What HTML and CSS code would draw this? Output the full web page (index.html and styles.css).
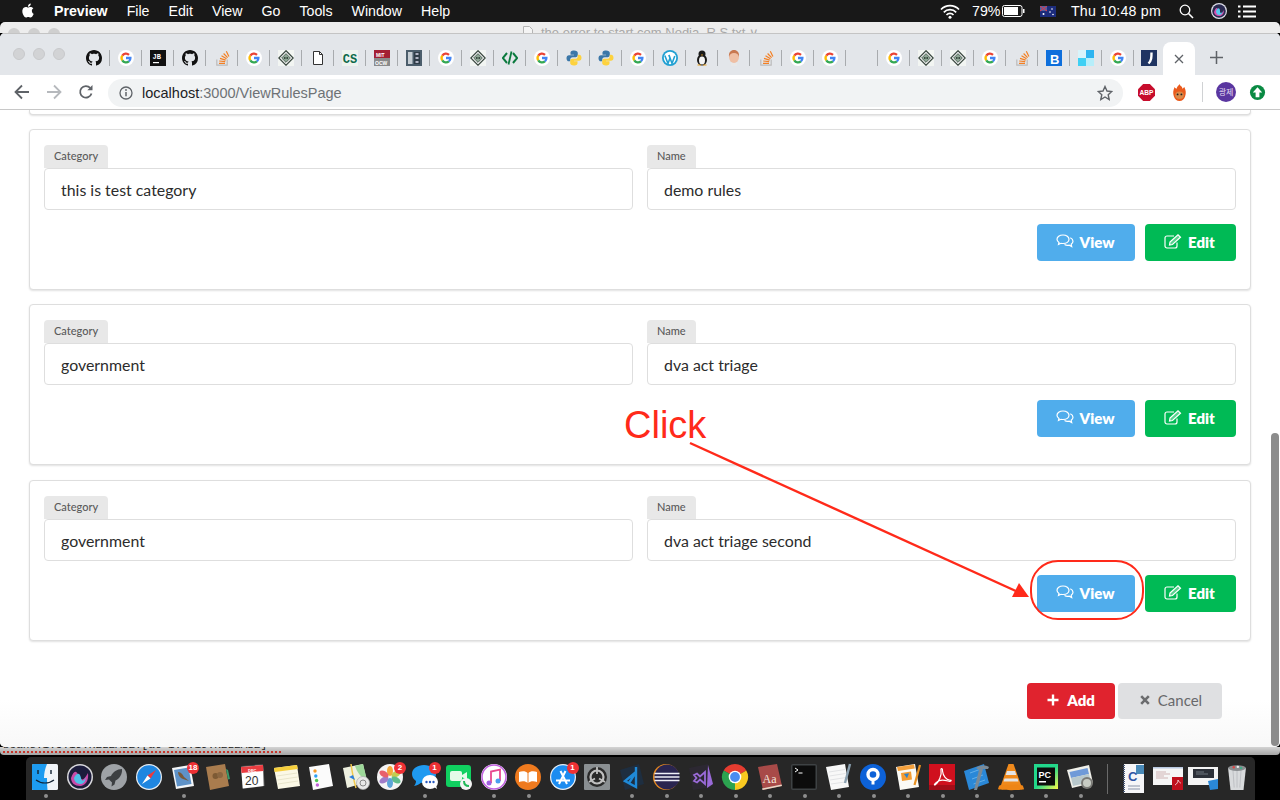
FILE: index.html
```html
<!DOCTYPE html>
<html lang="en">
<head>
    <meta charset="UTF-8">
    <title>View Rules Page</title>
    <link rel="stylesheet" href="styles.css">
</head>
<body>

<svg class="defs" width="0" height="0">
    <symbol id="fav-g" viewBox="0 0 16 16">
        <circle cx="8" cy="8" r="8" fill="#fff"/>
        <path d="M4.3 5.6A4.4 4.4 0 0 1 11 4.8" fill="none" stroke="#ea4335" stroke-width="2.3"/>
        <path d="M4.3 5.6a4.4 4.4 0 0 0 0 4.8" fill="none" stroke="#fbbc05" stroke-width="2.3"/>
        <path d="M4.3 10.4a4.4 4.4 0 0 0 6.6 1" fill="none" stroke="#34a853" stroke-width="2.3"/>
        <path d="M8 8h4.4a4.4 4.4 0 0 1-1.5 3.4" fill="none" stroke="#4285f4" stroke-width="2.3"/>
    </symbol>
    <symbol id="fav-gh" viewBox="0 0 16 16">
        <path fill="#111" d="M8 0C3.58 0 0 3.58 0 8c0 3.54 2.29 6.53 5.47 7.59.4.07.55-.17.55-.38 0-.19-.01-.82-.01-1.49-2.01.37-2.53-.49-2.69-.94-.09-.23-.48-.94-.82-1.13-.28-.15-.68-.52-.01-.53.63-.01 1.08.58 1.23.82.72 1.21 1.87.87 2.33.66.07-.52.28-.87.51-1.07-1.78-.2-3.64-.89-3.64-3.95 0-.87.31-1.59.82-2.15-.08-.2-.36-1.02.08-2.12 0 0 .67-.21 2.2.82.64-.18 1.32-.27 2-.27.68 0 1.36.09 2 .27 1.53-1.04 2.2-.82 2.2-.82.44 1.1.16 1.92.08 2.12.51.56.82 1.27.82 2.15 0 3.07-1.87 3.75-3.65 3.95.29.25.54.73.54 1.48 0 1.07-.01 1.93-.01 2.2 0 .21.15.46.55.38A8.013 8.013 0 0 0 16 8c0-4.42-3.58-8-8-8z"/>
    </symbol>
    <symbol id="fav-so" viewBox="0 0 16 16">
        <path d="M2.800 9.500V15.200h10.400V9.500" fill="none" stroke="#bcbbbb" stroke-width="1.200"/>
        <path d="M5 13.400h6M5.200 11l6 .6M6 8.400l5.700 1.700M7.500 5.800l5 3M9.600 3.500l4 4.100M12.300 1.200l2.600 5.200" fill="none" stroke="#f48024" stroke-width="1.200"/>
    </symbol>
    <symbol id="fav-d" viewBox="0 0 16 16">
        <rect width="16" height="16" fill="#f2f5f2"/>
        <path d="M8 .8 15.200 8 8 15.200.8 8z" fill="#fff" stroke="#3e4c44" stroke-width="1.300"/>
        <path d="M8 3.600 12.400 8 8 12.400 3.600 8z" fill="#8fa896" stroke="#3f4f45" stroke-width=".8"/>
        <circle cx="6.800" cy="8" r=".9" fill="#2f3f35"/>
        <circle cx="9.200" cy="8" r=".9" fill="#2f3f35"/>
    </symbol>
    <symbol id="fav-py" viewBox="0 0 16 16">
        <path d="M8 .5C5 .5 4.5 1.700 4.500 3v1.700H8v.6H3C1.500 5.300.5 6.400.5 8.200c0 2 1 3.100 2.400 3.100h1.400V9.500c0-1.400 1.100-2.300 2.400-2.300h3c1.200 0 2.100-.9 2.100-2.100V3c0-1.400-1.300-2.500-3.800-2.500z" fill="#3b77a8"/>
        <path d="M8 15.500c3 0 3.500-1.200 3.500-2.500v-1.700H8v-.6h5c1.500 0 2.500-1.100 2.500-2.900 0-2-1-3.100-2.400-3.100h-1.400v1.800c0 1.400-1.100 2.300-2.400 2.300h-3c-1.200 0-2.100.9-2.100 2.100V13c0 1.400 1.300 2.500 3.800 2.500z" fill="#fdd23e"/>
    </symbol>
    <symbol id="btn-view" viewBox="0 0 18 15">
        <path d="M7 1C3.500 1 1 3 1 5.300c0 1.300.8 2.400 2 3.200L2.500 10.500 5 9.300c.6.200 1.300.2 2 .2 3.500 0 6-1.900 6-4.200S10.500 1 7 1z" fill="none" stroke="#fff" stroke-width="1.200"/>
        <path d="M14.300 3.800C16 4.600 17 5.800 17 7.300c0 1.200-.7 2.200-1.800 3l.5 2.200-2.500-1.300c-1.500.4-3.300.2-4.700-.6" fill="none" stroke="#fff" stroke-width="1.200"/>
    </symbol>
    <symbol id="btn-edit" viewBox="0 0 18 15">
        <path d="M13 8.500V12a2 2 0 0 1-2 2H3a2 2 0 0 1-2-2V4a2 2 0 0 1 2-2h7" fill="none" stroke="#fff" stroke-width="1.200"/>
        <path d="M6 8 14 .8l2.500 2.500-8 7.200-3 .5z" fill="#fff" fill-opacity=".35" stroke="#fff" stroke-width="1.200"/>
    </symbol>
</svg>

<div class="screen">

    <header class="menubar">
        <svg class="apple" viewBox="0 0 24 24"><path fill="#fff" d="M12.152 6.896c-.948 0-2.415-1.078-3.96-1.04-2.04.027-3.91 1.183-4.961 3.014-2.117 3.675-.546 9.103 1.519 12.09 1.013 1.454 2.208 3.09 3.792 3.039 1.52-.065 2.09-.987 3.935-.987 1.831 0 2.35.987 3.96.948 1.637-.026 2.676-1.48 3.676-2.948 1.156-1.688 1.636-3.325 1.662-3.415-.039-.013-3.182-1.221-3.22-4.857-.026-3.04 2.48-4.494 2.597-4.559-1.429-2.09-3.623-2.324-4.39-2.376-2-.156-3.675 1.09-4.61 1.09zM15.53 3.83c.843-1.012 1.4-2.427 1.245-3.83-1.207.052-2.662.805-3.532 1.818-.78.896-1.454 2.338-1.273 3.714 1.338.104 2.715-.688 3.559-1.701"/></svg>
        <nav class="menu-items">
            <span class="menu-app">Preview</span>
            <span>File</span>
            <span>Edit</span>
            <span>View</span>
            <span>Go</span>
            <span>Tools</span>
            <span>Window</span>
            <span>Help</span>
        </nav>
        <div class="menu-status">
            <svg class="st-wifi" viewBox="0 0 20 15"><path d="M1 5.500a12.500 12.500 0 0 1 18 0M3.800 8.300a8.500 8.500 0 0 1 12.400 0M6.500 11a4.700 4.700 0 0 1 7 0" fill="none" stroke="#fff" stroke-width="1.700"/><circle cx="10" cy="13.300" r="1.500" fill="#fff"/></svg>
            <span class="st-batt-text">79%</span>
            <svg class="st-batt" viewBox="0 0 23 12"><rect x=".5" y=".5" width="19.500" height="11" rx="2" fill="none" stroke="#fff"/><rect x="2" y="2" width="14" height="8" fill="#fff"/><rect x="21" y="4" width="1.500" height="4" fill="#fff"/></svg>
            <svg class="st-flag" viewBox="0 0 16 11"><rect width="16" height="11" fill="#1c2c7c"/><rect width="7" height="5" fill="#5560a0"/><path d="M0 0l7 5M7 0 0 5" stroke="#e0384a" stroke-width="1"/><circle cx="3.500" cy="8" r="1" fill="#fff"/><circle cx="12" cy="3" r=".8" fill="#fff"/><circle cx="10" cy="6" r=".8" fill="#fff"/><circle cx="13" cy="8.500" r=".8" fill="#fff"/></svg>
            <span class="st-clock">Thu 10:48 pm</span>
            <svg class="st-search" viewBox="0 0 15 15"><circle cx="6" cy="6" r="4.800" fill="none" stroke="#fff" stroke-width="1.300"/><path d="M9.500 9.500 14 14" stroke="#fff" stroke-width="1.600"/></svg>
            <svg class="st-siri" viewBox="0 0 16 16"><circle cx="8" cy="8" r="8" fill="#dfe0ea"/><circle cx="8" cy="8" r="6.800" fill="#2a2a50"/><path d="M3 9c2-5 3-5 5-1s3 3 5-1c0 4-2 6-5 6s-5-2-5-4z" fill="#d84fae"/><path d="M5 8c2-4 4-3 4 0s2 2 3 0c-1 3-2 4-4 4s-3-2-3-4z" fill="#55c8ee"/></svg>
            <svg class="st-list" viewBox="0 0 18 13"><path d="M5 1.500h13M5 6.500h13M5 11.500h13" stroke="#fff" stroke-width="2"/><path d="M0 1.500h2.500M0 6.500h2.500M0 11.500h2.500" stroke="#fff" stroke-width="2"/></svg>
        </div>
    </header>

    <div class="back-window">
        <div class="back-lights"><i></i><i></i><i></i></div>
        <svg class="back-doc" viewBox="0 0 10 12"><path d="M.5.5h6l3 3v8h-9z" fill="#f4f4f4" stroke="#b4b4b4"/></svg>
        <div class="back-title">the error to start.com Nodia_R.S.txt ∨</div>
    </div>

    <main class="browser">
        <div class="tabstrip">
            <div class="lights"><i></i><i></i><i></i></div>
            <div class="tabs">
                <span class="tab"><svg><use href="#fav-gh"/></svg></span>
                <span class="tab"><svg><use href="#fav-g"/></svg></span>
                <span class="tab"><svg viewBox="0 0 16 16"><rect width="16" height="16" fill="#111"/><text x="2.500" y="8.500" class="fav-jb">JB</text><rect x="3" y="12" width="6" height="1.200" fill="#fff"/></svg></span>
                <span class="tab"><svg><use href="#fav-gh"/></svg></span>
                <span class="tab"><svg><use href="#fav-so"/></svg></span>
                <span class="tab"><svg><use href="#fav-g"/></svg></span>
                <span class="tab"><svg><use href="#fav-d"/></svg></span>
                <span class="tab"><svg viewBox="0 0 16 16"><path d="M3.500 1.500h6l3 3v10h-9z" fill="#fff" stroke="#333"/><path d="M9.500 1.500v3h3" fill="none" stroke="#333"/></svg></span>
                <span class="tab"><svg viewBox="0 0 16 16"><rect width="16" height="16" fill="#eef3ee"/><text x=".8" y="13" class="fav-cs">CS</text></svg></span>
                <span class="tab"><svg viewBox="0 0 16 16"><rect width="16" height="8" fill="#a31f34"/><rect y="8" width="16" height="8" fill="#8a8b8c"/><text x="2" y="7" class="fav-mit">MIT</text><text x="1" y="14.500" class="fav-mit">OCW</text></svg></span>
                <span class="tab"><svg viewBox="0 0 16 16"><rect width="16" height="16" fill="#4b5d6b"/><rect x="2" y="2" width="4.500" height="12" fill="#c6ced4"/><rect x="8" y="2" width="6" height="12" fill="#2f3d48"/><path d="M9.500 4h3M9.500 8h3M9.500 12h3" stroke="#dde" stroke-width="1.500"/></svg></span>
                <span class="tab"><svg><use href="#fav-g"/></svg></span>
                <span class="tab"><svg><use href="#fav-d"/></svg></span>
                <span class="tab"><svg viewBox="0 0 16 16"><path d="M5 3 .8 8 5 13M11 3l4.200 5L11 13" fill="none" stroke="#0b7a3e" stroke-width="2"/><path d="M9.500 1.500 6.500 14.500" stroke="#0b7a3e" stroke-width="1.800"/></svg></span>
                <span class="tab"><svg><use href="#fav-g"/></svg></span>
                <span class="tab"><svg><use href="#fav-py"/></svg></span>
                <span class="tab"><svg><use href="#fav-py"/></svg></span>
                <span class="tab"><svg><use href="#fav-g"/></svg></span>
                <span class="tab"><svg viewBox="0 0 16 16"><circle cx="8" cy="8" r="8" fill="#21a0d2"/><circle cx="8" cy="8" r="6.200" fill="#fff"/><path d="M2.800 5.500 6 13.500l2-5.500-1.200-3M7 5l3 8.500 2.800-7.500" fill="none" stroke="#21a0d2" stroke-width="1.600"/></svg></span>
                <span class="tab"><svg viewBox="0 0 16 16"><ellipse cx="8" cy="10" rx="5" ry="5.500" fill="#1a1a1a"/><circle cx="8" cy="4" r="3.500" fill="#1a1a1a"/><ellipse cx="8" cy="10.500" rx="3" ry="4" fill="#f4f4f4"/><path d="M7 4.500h2L8 6z" fill="#e8a020"/><path d="M3.500 15h3.500M9 15h3.500" stroke="#e8a020" stroke-width="1.200"/></svg></span>
                <span class="tab"><svg viewBox="0 0 16 16"><ellipse cx="8" cy="7" rx="5" ry="6" fill="#efbfa4"/><path d="M3 7c-.5-5 2-7 5-7s5.500 2 5 7c-1-3-2-4-5-4S4 4 3 7z" fill="#c87850"/><path d="M5 13h6v3H5z" fill="#e8e8e8"/></svg></span>
                <span class="tab"><svg><use href="#fav-so"/></svg></span>
                <span class="tab"><svg><use href="#fav-g"/></svg></span>
                <span class="tab"><svg><use href="#fav-g"/></svg></span>
                <span class="tab"></span>
                <span class="tab"><svg><use href="#fav-g"/></svg></span>
                <span class="tab"><svg><use href="#fav-d"/></svg></span>
                <span class="tab"><svg><use href="#fav-d"/></svg></span>
                <span class="tab"><svg><use href="#fav-g"/></svg></span>
                <span class="tab"><svg><use href="#fav-so"/></svg></span>
                <span class="tab"><svg viewBox="0 0 16 16"><rect width="16" height="16" fill="#0e6fdc"/><text x="4" y="14" class="fav-b">B</text></svg></span>
                <span class="tab"><svg viewBox="0 0 16 16"><rect x="8" width="8" height="8" fill="#2db4f0"/><rect y="8" width="8" height="8" fill="#3fd0f4"/><rect x="8" y="8" width="8" height="8" fill="#b6eefa"/><rect width="8" height="8" fill="#d8f4fb"/></svg></span>
                <span class="tab"><svg><use href="#fav-g"/></svg></span>
                <span class="tab tab-last"><svg viewBox="0 0 16 16"><rect width="16" height="16" fill="#1f3462"/><path d="M10.500 2.500c0 5 0 8-3 11" fill="none" stroke="#fff" stroke-width="2.400"/></svg></span>
            </div>
            <div class="tab-active"><svg viewBox="0 0 10 10"><path d="M1 1l8 8M9 1 1 9" stroke="#5f6368" stroke-width="1.300"/></svg></div>
            <svg class="tab-new" viewBox="0 0 12 12"><path d="M6 0v12M0 6h12" stroke="#5f6368" stroke-width="1.400"/></svg>
        </div>

        <div class="toolbar">
            <svg class="tb-btn" viewBox="0 0 16 16"><path d="M15 8H2M8 1.500 1.500 8 8 14.500" fill="none" stroke="#5f6368" stroke-width="1.800"/></svg>
            <svg class="tb-btn" viewBox="0 0 16 16"><path d="M1 8h13M8 1.500 14.500 8 8 14.500" fill="none" stroke="#b6b9bd" stroke-width="1.800"/></svg>
            <svg class="tb-btn tb-reload" viewBox="0 0 16 16"><path d="M13.500 9.500A5.800 5.800 0 1 1 12.300 4" fill="none" stroke="#5f6368" stroke-width="1.800"/><path d="M14.500 1v5.200H9.300z" fill="#5f6368"/></svg>
            <div class="omnibox">
                <svg class="omni-info" viewBox="0 0 14 14"><circle cx="7" cy="7" r="6" fill="none" stroke="#5f6368" stroke-width="1.300"/><path d="M7 6v4.200" stroke="#5f6368" stroke-width="1.500"/><circle cx="7" cy="4" r=".9" fill="#5f6368"/></svg>
                <span class="omni-url">localhost<span class="omni-path">:3000/ViewRulesPage</span></span>
                <svg class="omni-star" viewBox="0 0 16 16"><path d="M8 1.500 10 6l4.800.5-3.600 3.200 1 4.800L8 12l-4.200 2.500 1-4.800L1.200 6.500 6 6z" fill="none" stroke="#5f6368" stroke-width="1.400"/></svg>
            </div>
            <div class="extensions">
                <svg class="ext ext-abp" viewBox="0 0 18 18"><path d="M5.500 0h7L18 5.500v7L12.500 18h-7L0 12.500v-7z" fill="#c70d2c"/><text x="9" y="12" class="ext-abp-text">ABP</text></svg>
                <svg class="ext ext-fox" viewBox="0 0 18 18"><path d="M9 0c1 3 3 2 3 5 2-1 2-2 2-2 2 4 2 7 1 10-1 3-3 5-6 5s-5-2-6-5C2 10 2 7 4 3c0 0 0 2 2 2 0-2 2-3 3-5z" fill="#ea5a1c"/><ellipse cx="9" cy="12" rx="4.500" ry="4" fill="#d98a4a"/><circle cx="7" cy="11" r="1" fill="#222"/><circle cx="11" cy="11" r="1" fill="#222"/></svg>
                <i class="ext-sep"></i>
                <span class="ext-profile">광제</span>
                <svg class="ext ext-up" viewBox="0 0 18 18"><circle cx="9" cy="9" r="8" fill="#0a8a43"/><path d="M9 3.500 14 9h-3v5H7V9H4z" fill="#fff"/></svg>
            </div>
        </div>

        <div class="page">
            <div class="card card-clipped"></div>

            <section class="card">
                <div class="field-row">
                    <div class="field">
                        <div class="chip">Category</div>
                        <div class="field-value">this is test category</div>
                    </div>
                    <div class="field">
                        <div class="chip">Name</div>
                        <div class="field-value">demo rules</div>
                    </div>
                </div>
                <div class="card-actions">
                    <button class="btn btn-view"><svg><use href="#btn-view"/></svg>View</button>
                    <button class="btn btn-edit"><svg><use href="#btn-edit"/></svg>Edit</button>
                </div>
            </section>

            <section class="card card-mid">
                <div class="field-row">
                    <div class="field">
                        <div class="chip">Category</div>
                        <div class="field-value">government</div>
                    </div>
                    <div class="field">
                        <div class="chip">Name</div>
                        <div class="field-value">dva act triage</div>
                    </div>
                </div>
                <div class="card-actions">
                    <button class="btn btn-view"><svg><use href="#btn-view"/></svg>View</button>
                    <button class="btn btn-edit"><svg><use href="#btn-edit"/></svg>Edit</button>
                </div>
            </section>

            <section class="card">
                <div class="field-row">
                    <div class="field">
                        <div class="chip">Category</div>
                        <div class="field-value">government</div>
                    </div>
                    <div class="field">
                        <div class="chip">Name</div>
                        <div class="field-value">dva act triage second</div>
                    </div>
                </div>
                <div class="card-actions">
                    <button class="btn btn-view"><svg><use href="#btn-view"/></svg>View</button>
                    <button class="btn btn-edit"><svg><use href="#btn-edit"/></svg>Edit</button>
                </div>
            </section>

            <div class="page-actions">
                <button class="btn btn-add"><svg viewBox="0 0 12 12"><path d="M6 .5v11M.5 6h11" stroke="#fff" stroke-width="2.400"/></svg>Add</button>
                <button class="btn btn-cancel"><svg viewBox="0 0 10 10"><path d="M1.200 1.200l7.600 7.600M8.800 1.200 1.200 8.800" stroke="#6b6c6e" stroke-width="2.600"/></svg>Cancel</button>
            </div>

            <div class="scroll-thumb"></div>
        </div>
    </main>

    <div class="back-strip"><span class="back-strip-text">beans:1.5.19.RELEASE:[at 1.5.19.RELEASE]</span></div>

    <footer class="dock">
        <span class="dock-item has-dot"><svg viewBox="0 0 26 26"><rect width="26" height="26" rx="1.500" fill="#f0f4f8"/><path d="M1.500 0H15c-2 5-3 9-3 14h3c0 4 0 8 .5 12H1.500A1.500 1.500 0 0 1 0 24.500v-23A1.500 1.500 0 0 1 1.500 0z" fill="#1d9bf0"/><path d="M6 6v4M19 6v4" stroke="#123" stroke-width="1.400"/><path d="M4 16c5 4 13 4 18 0" fill="none" stroke="#123" stroke-width="1.200"/></svg></span>
        <span class="dock-item"><svg viewBox="0 0 26 26"><circle cx="13" cy="13" r="13" fill="#d8d8dc"/><circle cx="13" cy="13" r="11.500" fill="#1c1c3c"/><path d="M4 14c3-8 5-8 8-2s5 4 9-3c1 8-3 13-8 13S4 19 4 14z" fill="#c84aa8"/><path d="M7 14c3-6 6-5 7 0s4 2 5-1c-1 6-3 7-6 7s-6-3-6-6z" fill="#4fc0e8"/></svg></span>
        <span class="dock-item"><svg viewBox="0 0 26 26"><circle cx="13" cy="13" r="13" fill="#9ea2a6"/><path d="M21 5c-5 0-9 3-11 7l-4 1-2 3 4-.5 3 3-.5 4 3-2 1-4c4-2 7-6 6.500-11.500z" fill="#3c3f42"/></svg></span>
        <span class="dock-item"><svg viewBox="0 0 26 26"><circle cx="13" cy="13" r="13" fill="#e8eef4"/><circle cx="13" cy="13" r="11.800" fill="#1f86e0"/><path d="M20 6 11.500 11.500 14.500 14.500z" fill="#f0383a"/><path d="M6 20l5.500-8.500 3 3z" fill="#fff"/></svg></span>
        <span class="dock-item has-dot"><svg viewBox="0 0 26 26"><path d="M2 4 20 1l4 21-18 3z" fill="#f4f6f8"/><path d="M4 6l14.500-2.500 3 16.500-14.500 2.500z" fill="#5e92c8"/><path d="M8 8c3 0 5 3 6 5l5 4-6-2c-3-1-5-4-5-7z" fill="#7a5a3a"/></svg><span class="dock-badge">18</span></span>
        <span class="dock-item"><svg viewBox="0 0 26 26"><path d="M1 3 20 0l4 22-19 4z" fill="#a97c4e"/><path d="M21 5l2 1 2 9-2 .5z" fill="#3a9a6a"/><circle cx="10.500" cy="12" r="3" fill="#7d5a34"/><circle cx="15" cy="11" r="3" fill="#8a6640"/></svg></span>
        <span class="dock-item"><svg viewBox="0 0 26 26"><path d="M2 2 24 0l2 22-22 3z" fill="#4a4a4a"/><path d="M2 3 24 1l.7 21-21 2.500z" fill="#fff"/><path d="M2 3 24 1l.4 6L2.500 9z" fill="#ea3c40"/><text x="9" y="7.500" class="dock-cal-mon">DEC</text><text x="6" y="20.500" class="dock-cal-day">20</text></svg></span>
        <span class="dock-item"><svg viewBox="0 0 26 26"><path d="M0 4 23 1l3 21-22 3z" fill="#fbf8e6"/><path d="M0 4 23 1l.8 4L.6 8z" fill="#f6cf3c"/><path d="M3 12l20-3M3.500 16l20-3M4 20l20-3" stroke="#e0dcc0" stroke-width=".7"/></svg></span>
        <span class="dock-item"><svg viewBox="0 0 26 26"><path d="M1 3 21 0l4 22-20 4z" fill="#fbfbfb"/><circle cx="7" cy="7" r="1.700" fill="#f59a2a"/><circle cx="7.800" cy="12" r="1.700" fill="#2a9ff5"/><circle cx="8.600" cy="16.500" r="1.700" fill="#4ec850"/><circle cx="9.400" cy="21" r="1.700" fill="#c060d8"/></svg></span>
        <span class="dock-item"><svg viewBox="0 0 26 26"><path d="M0 4 20 0l4 18-20 6z" fill="#eef0e0"/><path d="M12 2l8-2 4 16c-6-2-10-8-12-14z" fill="#9ed89a"/><path d="M8 0c1 7 2 14 5 24" fill="none" stroke="#f2c94c" stroke-width="1.500"/><path d="M6 13l4-2 2 5z" fill="#2a7fe0"/><circle cx="20" cy="19" r="6.500" fill="#e8e8e8" stroke="#aaa" stroke-width=".7"/><circle cx="20" cy="19" r="3" fill="none" stroke="#888"/></svg></span>
        <span class="dock-item"><svg viewBox="0 0 26 26"><circle cx="13" cy="13" r="13" fill="#f4f4f4"/><ellipse cx="13" cy="7" rx="3" ry="5" fill="#f4a83c"/><ellipse cx="19" cy="10" rx="3" ry="5" transform="rotate(60 19 10)" fill="#c4cc50"/><ellipse cx="19" cy="16" rx="3" ry="5" transform="rotate(120 19 16)" fill="#60bc8c"/><ellipse cx="13" cy="19" rx="3" ry="5" fill="#5ca4d8"/><ellipse cx="7" cy="16" rx="3" ry="5" transform="rotate(60 7 16)" fill="#a07cc8"/><ellipse cx="7" cy="10" rx="3" ry="5" transform="rotate(120 7 10)" fill="#e8606c"/></svg><span class="dock-badge">2</span></span>
        <span class="dock-item has-dot"><svg viewBox="0 0 26 26"><path d="M12 1c6.500 0 12 3.500 12 9s-5.500 9-12 9c-1 0-2-.1-3-.3C7.500 20 5 21.500 2 22c1.200-1.300 2-3 2-5C1.500 15.300 0 13 0 10 0 4.500 5.500 1 12 1z" fill="#1f9af0"/><ellipse cx="18" cy="18" rx="8" ry="7" fill="#fff"/><path d="M22 23l3 2-1-4z" fill="#fff"/><circle cx="14.500" cy="18" r="1.200" fill="#2a5ac0"/><circle cx="18" cy="18" r="1.200" fill="#2a5ac0"/><circle cx="21.500" cy="18" r="1.200" fill="#2a5ac0"/></svg><span class="dock-badge">1</span></span>
        <span class="dock-item"><svg viewBox="0 0 26 26"><rect y="1" width="25" height="22" rx="3" fill="#10d060"/><rect x="4" y="7" width="12" height="10" rx="2" fill="#e4fbe8"/><path d="M16 11l5-3v8l-5-3z" fill="#e4fbe8"/><circle cx="20" cy="20" r="6" fill="#f4f4f4"/><path d="M18 17c0 3 2 5 5 5" fill="none" stroke="#20b858" stroke-width="2"/></svg></span>
        <span class="dock-item has-dot"><svg viewBox="0 0 26 26"><circle cx="13" cy="13" r="13" fill="#fff"/><circle cx="13" cy="13" r="12" fill="none" stroke="#c060e0" stroke-width="1.500"/><path d="M10 19V7.500l9-2V17" fill="none" stroke="#e84a90" stroke-width="1.800"/><circle cx="8" cy="19" r="2.500" fill="#a060e0"/><circle cx="17" cy="17" r="2.500" fill="#4a9ff0"/></svg></span>
        <span class="dock-item has-dot"><svg viewBox="0 0 26 26"><circle cx="13" cy="13" r="13" fill="#ef7a1e"/><path d="M4 8c3-1 7-1 8.500 1v10C11 17 7 17 4 18z" fill="#fff"/><path d="M22 8c-3-1-7-1-8.500 1v10c1.500-2 5.500-2 8.500-1z" fill="#fff"/></svg></span>
        <span class="dock-item"><svg viewBox="0 0 26 26"><circle cx="13" cy="13" r="13" fill="#e8f0f8"/><circle cx="13" cy="13" r="11.800" fill="#1c8cf0"/><path d="M9 20 15.500 7M17 20 10.500 7M6 16.500h14" stroke="#fff" stroke-width="2"/></svg><span class="dock-badge">1</span></span>
        <span class="dock-item"><svg viewBox="0 0 26 26"><rect width="26" height="26" rx="1" fill="#8a8f92"/><circle cx="13" cy="13" r="10" fill="#2a2a2a"/><circle cx="13" cy="13" r="6.500" fill="none" stroke="#c0c0c0" stroke-width="2.200"/><path d="M13 3v7M5 18l6-3.500M21 18l-6-3.500" stroke="#c0c0c0" stroke-width="1.800"/></svg></span>
        <span class="dock-item has-dot"><svg viewBox="0 0 26 26"><path d="M1 6 20 0l5 20-19 6z" fill="#1e2e40"/><path d="M17 3v20l-11-6 11-9-7 11" fill="none" stroke="#1f8ad8" stroke-width="2.400"/></svg></span>
        <span class="dock-item has-dot"><svg viewBox="0 0 26 26"><circle cx="13" cy="13" r="13" fill="#e88a20"/><circle cx="14" cy="13" r="12.500" fill="#2a2550"/><path d="M1.500 9.500h25M1.500 13h25M1.500 16.500h25" stroke="#f0f0f8" stroke-width="1.700"/></svg></span>
        <span class="dock-item has-dot"><svg viewBox="0 0 26 26"><path d="M1 4 20 0l4 23L5 26z" fill="#2c2832"/><path d="M20 1l5 19-6 4z" fill="#9a6ad8"/><path d="M6 11l3-1.500 3 3 5-4.500v12l-5-4.500-3 3-3-1.500 2.500-3z" fill="none" stroke="#9a6ad8" stroke-width="1.800"/></svg></span>
        <span class="dock-item has-dot"><svg viewBox="0 0 26 26"><path d="M13 13 24.300 6.500A13 13 0 0 0 1.700 6.500z" fill="#e53c30"/><path d="M13 13 1.700 6.500A13 13 0 0 0 13 26z" fill="#2ca350"/><path d="M13 13 13 26A13 13 0 0 0 24.300 6.500z" fill="#f9c920"/><circle cx="13" cy="13" r="6.300" fill="#fff"/><circle cx="13" cy="13" r="4.900" fill="#4a8cf0"/></svg></span>
        <span class="dock-item has-dot"><svg viewBox="0 0 26 26"><path d="M1 3 20 0l5 22-19 4z" fill="#a84a48"/><path d="M5.500 26 25 22l-.5-1.500L5 24.500z" fill="#e8d8c8"/><text x="5.500" y="19" class="dock-aa">Aa</text></svg></span>
        <span class="dock-item has-dot"><svg viewBox="0 0 26 26"><rect width="26" height="26" rx="2" fill="#3e4244"/><rect x="1.500" y="1.500" width="23" height="23" fill="#0c0c0c"/><path d="M4 4l3 2-3 2M7.500 9h4" fill="none" stroke="#fff" stroke-width="1"/></svg></span>
        <span class="dock-item has-dot"><svg viewBox="0 0 26 26"><path d="M0 3 19 0l4 23-18 3z" fill="#f8f8f8"/><path d="M3 8l16-2.500M3.500 12l16-2.500M4 16l16-2.500M5 20l14-2" stroke="#d8dadc" stroke-width=".7"/><path d="M24 0l-5 19" stroke="#8aa0b0" stroke-width="2.400"/></svg></span>
        <span class="dock-item has-dot"><svg viewBox="0 0 26 26"><circle cx="13" cy="13" r="13" fill="#0d62d8"/><circle cx="13" cy="10.500" r="5" fill="none" stroke="#fff" stroke-width="3.400"/><path d="M11.500 14h3v6.500h-3z" fill="#fff"/></svg></span>
        <span class="dock-item has-dot"><svg viewBox="0 0 26 26"><path d="M1 3 20 0l4 23-19 3z" fill="#fbfbf6"/><path d="M2 3 19 .5l.8 4L3 7z" fill="#f4a03c"/><path d="M6 9l10-1.500 1 8-10 1.500z" fill="#f49c32"/><path d="M9 10l5-.8-2 5z" fill="#2f82c8"/><path d="M25 1l-5.500 20" stroke="#e89020" stroke-width="2.200"/></svg></span>
        <span class="dock-item has-dot"><svg viewBox="0 0 26 26"><rect width="26" height="26" fill="#d0101e"/><rect y="21" width="26" height="5" fill="#a50d18"/><path d="M6 21c4-3 7-10 6-15-.5-2 2-2 1.500 1 .5 5 4 9 7 9 3 0 1.500 2-1.500 1-4-1-9-1-11 1-2 1.500-3.500 3-2 3" fill="none" stroke="#fff" stroke-width="1.200"/></svg></span>
        <span class="dock-item has-dot"><svg viewBox="0 0 26 26"><path d="M0 7l20-7 5 19-20 7z" fill="#2a88d8"/><path d="M6 9 17 5M8 15l11-4M9.500 20 21 16" stroke="#7cc0f0" stroke-width=".7"/><path d="M12 4c4-3 9-3 13-1l-1 2-5 0-6 21h-3l5-20z" fill="#7a8a98"/></svg></span>
        <span class="dock-item has-dot"><svg viewBox="0 0 26 26"><path d="M10.500 0h5L23 21H3z" fill="#f08a1c"/><path d="M9 7h8l1.300 4H7.700zM6.500 14.500h13l1 3h-15z" fill="#e4e4e4"/><path d="M1 22c0-2 24-2 24 0l1 3c0 1.500-26 1.500-26 0z" fill="#ee8516"/></svg></span>
        <span class="dock-item has-dot"><svg viewBox="0 0 26 26"><defs><linearGradient id="pc-grad" x1="0" y1="0" x2="1" y2="1"><stop offset="0" stop-color="#22d88f"/><stop offset=".5" stop-color="#21d789"/><stop offset="1" stop-color="#fcf84a"/></linearGradient></defs><rect x="1" width="24" height="25" fill="url(#pc-grad)"/><rect x="4" y="3.500" width="18" height="18" fill="#0c0c0c"/><text x="5.500" y="13.500" class="dock-pc">PC</text><rect x="6" y="17" width="7" height="1.500" fill="#fff"/></svg></span>
        <span class="dock-item has-dot"><svg viewBox="0 0 26 26"><path d="M0 6 22 1l4 18-21 5z" fill="#f0f0ea"/><path d="M2.500 8l18-4 1.500 6-18 4z" fill="#6f9ad8"/><path d="M4 14l18-4 2 8-18 4z" fill="#b8c8cc"/><circle cx="20" cy="19" r="6" fill="#7a7a76"/><circle cx="20" cy="19" r="4" fill="#c8ccc4"/></svg></span>
        <i class="dock-sep"></i>
        <span class="dock-item dock-doc"><svg viewBox="0 0 22 29"><rect x="1" width="20" height="29" fill="#f6f6f8"/><path d="M1 1v28" stroke="#4a5a78" stroke-width="2" stroke-dasharray="1 1"/><rect x="13" y="1" width="8" height="9" fill="#4a8ab8"/><text x="5" y="17" class="dock-c">C</text><path d="M5 22h12M5 25h12" stroke="#8a94a8"/></svg></span>
        <span class="dock-item dock-thumb"><svg viewBox="0 0 30 18"><rect width="30" height="18" fill="#f6f6f6"/><rect width="30" height="1.500" fill="#b8c8e0"/><path d="M3 5h10M3 7h14M3 9h8M3 11h12" stroke="#c09a9a" stroke-width=".7"/><rect x="19" y="10" width="11" height="13" fill="#c00f1c"/><path d="M22 18c2-1 3-3 3-5 1 2 2 3 3 3" fill="none" stroke="#fff" stroke-width=".7"/></svg></span>
        <span class="dock-item dock-thumb"><svg viewBox="0 0 30 18"><rect width="30" height="18" fill="#f4f4f4"/><rect x="5" y="2" width="21" height="9" fill="#2c3038"/><path d="M8 5h8M8 7h12" stroke="#a0a8b0" stroke-width=".6"/><path d="M20 14l10-2v10l-8 1z" fill="#2a88d8"/></svg></span>
        <span class="dock-item"><svg viewBox="0 0 26 32"><path d="M2 5h22l-3 27H5z" fill="#d8dadc"/><path d="M8 7l1.500 22M13 7v22M18 7l-1.500 22" stroke="#b0b2b6" stroke-width=".8"/><ellipse cx="13" cy="5" rx="11" ry="3.500" fill="#8a8d90"/><circle cx="9" cy="4" r="1.500" fill="#d44"/><circle cx="14" cy="3.500" r="1.500" fill="#eee"/><circle cx="18" cy="5" r="1.500" fill="#4a8"/></svg></span>
    </footer>

    <div class="click-label">Click</div>
    <svg class="annotation" viewBox="0 0 1280 800">
        <path d="M690 443 1018 592" fill="none" stroke="#ff2a1a" stroke-width="2.400"/>
        <path d="M1029 597 1012 597 1019 583z" fill="#ff2a1a"/>
        <rect x="1031" y="561" width="112" height="58" rx="27" fill="none" stroke="#ff2a1a" stroke-width="2"/>
    </svg>

</div>

</body>
</html>
```

FILE: styles.css
```css
* {
    box-sizing: border-box;
}
html, body {
    margin: 0;
    padding: 0;
    background: #000;
}
.defs {
    position: absolute;
}
.screen {
    position: relative;
    width: 1280px;
    height: 800px;
    overflow: hidden;
    display: flex;
    flex-direction: column;
    font-family: "Lato", sans-serif;
}

/* mac menu bar */
.menubar {
    flex: 0 0 22px;
    display: flex;
    align-items: center;
    background: #181818;
    color: #fff;
    font-family: "Liberation Sans", sans-serif;
    font-size: 14.2px;
    padding-left: 21px;
}
.apple {
    width: 14px;
    height: 15px;
    margin-top: -2px;
}
.menu-items {
    display: flex;
    gap: 19px;
    margin-left: 19px;
}
.menu-app {
    font-weight: bold;
}
.menu-status {
    margin-left: auto;
    display: flex;
    align-items: center;
    padding-right: 24px;
}
.st-wifi {
    width: 20px;
    height: 15px;
}
.st-batt-text {
    margin-left: 12px;
    width: 30px;
}
.st-batt {
    width: 23px;
    height: 12px;
}
.st-flag {
    width: 16px;
    height: 11px;
    margin-left: 15px;
}
.st-clock {
    margin-left: 15px;
    width: 91px;
    letter-spacing: 0.2px;
    white-space: nowrap;
}
.st-search {
    width: 15px;
    height: 15px;
    margin-left: 17px;
}
.st-siri {
    width: 16px;
    height: 16px;
    margin-left: 17px;
}
.st-list {
    width: 18px;
    height: 13px;
    margin-left: 11px;
}

/* window behind the browser */
.back-window {
    flex: 0 0 11px;
    display: flex;
    background: #ededed;
    overflow: hidden;
    border-radius: 5px 5px 0 0;
}
.back-lights {
    display: flex;
    gap: 8px;
    margin: 6px 0 0 8px;
}
.back-lights i {
    width: 12px;
    height: 12px;
    border-radius: 50%;
    background: #cfcfcf;
}
.back-doc {
    width: 10px;
    height: 12px;
    margin: 4px 0 0 463px;
    flex: none;
}
.back-title {
    margin: 3px 0 0 8px;
    font-family: "Liberation Sans", sans-serif;
    font-size: 13px;
    color: #a8a8a8;
    white-space: nowrap;
}

/* chrome */
.browser {
    flex: 0 0 714px;
    display: flex;
    flex-direction: column;
    border-radius: 5px;
    overflow: hidden;
    background: #fff;
}
.tabstrip {
    flex: 0 0 42px;
    display: flex;
    align-items: flex-end;
    background: #e3e6ea;
    border-top: 1px solid #c4c4c4;
    position: relative;
}
.lights {
    position: absolute;
    left: 13px;
    top: 14px;
    display: flex;
    gap: 8px;
}
.lights i {
    width: 12px;
    height: 12px;
    border-radius: 50%;
    background: #d2d3d5;
    border: 1px solid #c8c9cb;
}
.tabs {
    display: flex;
    margin: 0 0 9px 78px;
}
.tab {
    width: 32px;
    height: 16px;
    display: flex;
    justify-content: center;
    border-right: 1px solid #a8abae;
    flex: 0 0 32px;
}
.tab svg {
    width: 16px;
    height: 16px;
}
.tab-last {
    border-right: none;
    flex: 0 0 29px;
    width: 29px;
}
.tab-active {
    width: 32px;
    height: 33px;
    background: #fff;
    border-radius: 8px 8px 0 0;
    display: flex;
    align-items: center;
    justify-content: center;
}
.tab-active svg {
    width: 10px;
    height: 10px;
}
.tab-new {
    width: 13px;
    height: 13px;
    margin: 0 0 11px 15px;
}
.fav-jb {
    font: bold 7px "Liberation Mono", monospace;
    fill: #fff;
}
.fav-cs {
    font: bold 12px "Liberation Mono", monospace;
    fill: #0c6a4a;
}
.fav-mit {
    font: bold 5px "Liberation Sans", sans-serif;
    fill: #fff;
}
.fav-b {
    font: bold 13px "Liberation Sans", sans-serif;
    fill: #fff;
}

.toolbar {
    flex: 0 0 35px;
    display: flex;
    align-items: center;
    background: #fff;
    padding-left: 14px;
    border-bottom: 1px solid #c8c8c8;
}
.tb-btn {
    width: 16px;
    height: 16px;
    margin-right: 16px;
}
.tb-reload {
    margin-right: 14px;
}
.omnibox {
    width: 1015px;
    height: 28px;
    margin-top: 1px;
    display: flex;
    align-items: center;
    background: #f1f3f4;
    border-radius: 14px;
    padding-left: 11px;
}
.omni-info {
    width: 14px;
    height: 14px;
}
.omni-url {
    margin-left: 9px;
    font-family: "Liberation Sans", sans-serif;
    font-size: 14.5px;
    color: #202124;
}
.omni-path {
    color: #6e7276;
}
.omni-star {
    width: 16px;
    height: 16px;
    margin-left: auto;
    margin-right: 10px;
}
.extensions {
    display: flex;
    align-items: center;
    margin-left: 15px;
}
.ext {
    width: 17px;
    height: 17px;
}
.ext-abp {
    margin-right: 16px;
}
.ext-abp-text {
    font: bold 7px "Liberation Sans", sans-serif;
    fill: #fff;
    text-anchor: middle;
}
.ext-sep {
    width: 1px;
    height: 20px;
    background: #d0d2d4;
    margin: 0 13px 0 14px;
}
.ext-profile {
    width: 20px;
    height: 20px;
    border-radius: 50%;
    background: #5a36a0;
    color: #e4dcf0;
    font: 8px/20px "Noto Sans CJK KR", sans-serif;
    text-align: center;
    margin-right: 13px;
}

/* page content */
.page {
    flex: 1;
    padding: 0 29px;
    position: relative;
    background: linear-gradient(to bottom, #fff 0, #fff 590px, #f8f8f8 100%);
    overflow: hidden;
}
.card {
    width: 1222px;
    height: 161px;
    background: #fff;
    border: 1px solid #dedede;
    border-radius: 4px;
    box-shadow: 0 1px 2px rgba(0, 0, 0, 0.12);
    padding: 15px 14px 0;
    margin-bottom: 14px;
}
.card-clipped {
    height: 5px;
    border-top: none;
    border-radius: 0 0 4px 4px;
    padding: 0;
}
.card-mid {
    margin-bottom: 15px;
}
.card-mid .card-actions {
    margin-top: 15px;
}
.field-row {
    display: grid;
    grid-template-columns: 589px 589px;
    gap: 14px;
}
.chip {
    display: inline-block;
    height: 23px;
    line-height: 22px;
    padding: 0 10px;
    background: #e8e8e8;
    border-radius: 4px 4px 0 0;
    color: #5a5a5a;
    font-size: 11px;
    font-weight: 500;
    vertical-align: bottom;
}
.field-value {
    height: 42px;
    line-height: 41px;
    padding-left: 16px;
    border: 1px solid #dedede;
    border-radius: 4px;
    font-size: 15.9px;
    color: #2c2c2c;
}
.card-actions {
    display: flex;
    justify-content: flex-end;
    gap: 10px;
    margin-top: 14px;
}
.btn {
    display: flex;
    align-items: center;
    justify-content: center;
    border: none;
    border-radius: 4px;
    height: 37px;
    font-family: "Lato", sans-serif;
    font-size: 15px;
    font-weight: 800;
    color: #fff;
    padding: 0 2px 2px 0;
}
.btn svg {
    width: 18px;
    height: 15px;
    margin-right: 6px;
}
.btn-view {
    width: 98px;
    background: #50adec;
}
.btn-edit {
    width: 91px;
    background: #00ba55;
}
.page-actions {
    display: flex;
    justify-content: flex-end;
    gap: 3px;
    margin-top: 42px;
    padding-right: 29px;
}
.btn-add {
    width: 88px;
    height: 36px;
    background: #e0232e;
    padding: 0 0 2px;
}
.btn-add svg {
    width: 12px;
    height: 12px;
    margin-right: 8px;
}
.btn-cancel {
    width: 104px;
    height: 36px;
    background: #dfe0e2;
    color: #68696b;
    font-weight: 400;
    padding: 0 0 2px 2px;
}
.btn-cancel svg {
    width: 10px;
    height: 10px;
    margin-right: 8px;
}
.scroll-thumb {
    position: absolute;
    right: 1px;
    top: 323px;
    bottom: 1px;
    width: 8px;
    border-radius: 4px;
    background: #8c8c8c;
}

/* bit of the window underneath */
.back-strip {
    flex: 0 0 8px;
    background: linear-gradient(to bottom, #d4d4d4, #a4a4a4);
    overflow: hidden;
    display: flex;
    align-items: flex-end;
    padding: 0 0 2px 3px;
    border-radius: 0 0 4px 4px;
}
.back-strip-text {
    font: 11px/10px "Liberation Mono", monospace;
    color: #222;
    border-bottom: 2px dotted #c8352a;
    white-space: nowrap;
    width: 278px;
    overflow: hidden;
    padding-bottom: 1px;
}

/* dock */
.dock {
    position: relative;
    height: 43px;
    margin: 2px 25px 0 26px;
    display: flex;
    padding: 7px 0 0 2px;
    background: #272727;
    border-radius: 5px 5px 0 0;
}
.dock-item {
    position: relative;
    flex: 0 0 34.5px;
    width: 34.5px;
    height: 26px;
    display: flex;
    justify-content: center;
}
.dock-item svg {
    width: 26px;
    height: 26px;
    overflow: visible;
}
.has-dot::after {
    content: "";
    position: absolute;
    left: 15.500px;
    top: 30px;
    width: 4px;
    height: 4px;
    border-radius: 50%;
    background: #8e8e8e;
}
.dock-badge {
    position: absolute;
    left: 21px;
    top: -2px;
    min-width: 12px;
    height: 12px;
    border-radius: 50%;
    background: #ee3034;
    color: #fff;
    font: bold 8px/12px "Liberation Sans", sans-serif;
    text-align: center;
}
.dock-sep {
    width: 1px;
    height: 30px;
    background: #6a6a6a;
    margin: 0 9px;
}
.dock-doc svg {
    width: 22px;
    height: 29px;
}
.dock-thumb svg {
    width: 30px;
    height: 18px;
    margin-top: 3px;
}
.dock-cal-mon {
    font: bold 4px "Liberation Sans", sans-serif;
    fill: #fff;
}
.dock-cal-day {
    font: 12px "Liberation Sans", sans-serif;
    fill: #333;
}
.dock-aa {
    font: 12px "Liberation Serif", serif;
    fill: #f4e8dc;
}
.dock-pc {
    font: bold 9px "Liberation Sans", sans-serif;
    fill: #fff;
}
.dock-c {
    font: bold 13px "Liberation Sans", sans-serif;
    fill: #2f55a4;
}

/* red markup drawn over the screenshot */
.click-label {
    position: absolute;
    left: 624px;
    top: 403px;
    font-family: "Liberation Sans", sans-serif;
    font-size: 38px;
    line-height: 44px;
    color: #ff2a1a;
}
.annotation {
    position: absolute;
    left: 0;
    top: 0;
    width: 1280px;
    height: 800px;
    pointer-events: none;
}
```
